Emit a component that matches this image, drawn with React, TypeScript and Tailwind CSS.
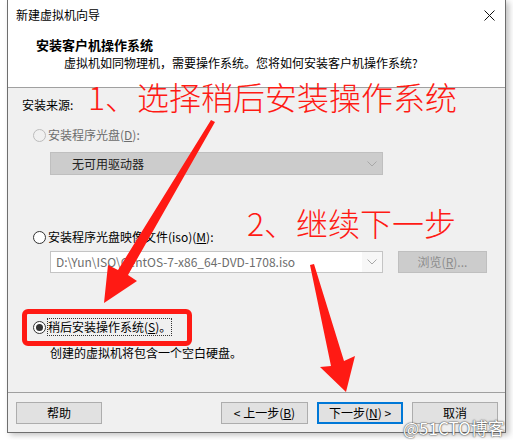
import React from "react";

const Radio = ({ checked = false, disabled = false }: { checked?: boolean; disabled?: boolean }) => (
  <span
    className={`flex h-[13px] w-[13px] items-center justify-center rounded-full border ${
      disabled ? "border-[#bcbcbc] bg-[#f0f0f0]" : "border-[#333333] bg-white"
    }`}
  >
    {checked && <span className="h-[7px] w-[7px] rounded-full bg-[#333333]" />}
  </span>
);

const Chevron = () => (
  <svg width="10" height="6" viewBox="0 0 10 6" className="shrink-0">
    <polyline points="0.5,0.5 5,5 9.5,0.5" fill="none" stroke="#a8a8a8" strokeWidth="1" />
  </svg>
);

const Btn = ({ children, primary = false, className = "" }: { children: React.ReactNode; primary?: boolean; className?: string }) => (
  <div
    className={`flex h-[22px] items-center justify-center bg-[#e1e1e1] text-black ${
      primary ? "border-2 border-[#0078d7]" : "border border-[#adadad]"
    } ${className}`}
  >
    {children}
  </div>
);

export default function App() {
  return (
    <div className="relative h-[440px] w-[513px] overflow-hidden bg-white font-['Noto_Sans_CJK_SC','Microsoft_YaHei',sans-serif] text-[12px] leading-[16px] text-black">
      <div className="ml-[7px] flex h-[433px] w-[499px] flex-col border-x border-b border-[#6e6e6e] bg-[#f0f0f0] shadow-[3px_2px_6px_rgba(0,0,0,0.25)]">
        {/* title bar */}
        <div className="flex h-[30px] items-center justify-between bg-white pl-[8px] pr-[10px]">
          <span>新建虚拟机向导</span>
          <svg width="11" height="11" viewBox="0 0 11 11">
            <path d="M0.5 0.5 L10.5 10.5 M10.5 0.5 L0.5 10.5" stroke="#111" strokeWidth="1" />
          </svg>
        </div>

        {/* header */}
        <div className="h-[58px] border-b border-[#a0a0a0] bg-white pt-[6px]">
          <div className="pl-[28px] text-[13px] font-bold leading-[18px]">安装客户机操作系统</div>
          <div className="pl-[56px] leading-[18px]">虚拟机如同物理机，需要操作系统。您将如何安装客户机操作系统?</div>
        </div>

        {/* body */}
        <div className="flex h-[304px] flex-col pl-[14px]">
          <div className="mt-[9px]">安装来源:</div>

          <div className="mt-[14px] flex items-center gap-[2px] pl-[11px] text-[#6d6d6d]">
            <Radio disabled />
            <span>
              安装程序光盘(<span className="underline">D</span>):
            </span>
          </div>

          <div className="ml-[28px] mt-[9px] flex h-[23px] w-[333px] items-center justify-between border border-[#bfbfbf] bg-[#cccccc] pl-[21px] pr-[5px] text-[#222]">
            <span>无可用驱动器</span>
            <Chevron />
          </div>

          <div className="mt-[54px] flex items-center gap-[2px] pl-[11px]">
            <Radio />
            <span>
              安装程序光盘映像文件(iso)(<span className="underline">M</span>):
            </span>
          </div>

          <div className="mt-[6px] flex items-center">
            <div className="ml-[28px] flex h-[22px] w-[333px] items-stretch border border-[#c4c4c4] bg-white text-[#6d6d6d]">
              <div className="flex flex-1 items-center pl-[5px]">D:\Yun\ISO\CentOS-7-x86_64-DVD-1708.iso</div>
              <div className="flex w-[20px] items-center justify-center bg-[#f7f7f7]">
                <Chevron />
              </div>
            </div>
            <div className="ml-[15px] flex h-[22px] w-[89px] items-center justify-center border border-[#bfbfbf] bg-[#cccccc] text-[#8c8c8c]">
              浏览(<span className="underline">R</span>)...
            </div>
          </div>

          <div className="mt-[46px] flex items-center gap-[2px] pl-[11px]">
            <Radio checked />
            <span className="outline outline-1 outline-dotted outline-[#333]">
              稍后安装操作系统(<span className="underline">S</span>)。
            </span>
          </div>

          <div className="mt-[10px] pl-[28px]">创建的虚拟机将包含一个空白硬盘。</div>
        </div>

        {/* footer */}
        <div className="flex flex-1 items-start border-t border-[#a0a0a0] pl-[8px] pt-[9px]">
          <Btn className="w-[86px]">帮助</Btn>
          <Btn className="ml-[119px] w-[87px]">
            &lt; 上一步(<span className="underline">B</span>)
          </Btn>
          <Btn primary className="ml-[9px] w-[86px]">
            下一步(<span className="underline">N</span>) &gt;
          </Btn>
          <Btn className="ml-[9px] w-[86px]">取消</Btn>
        </div>
      </div>

      {/* annotations */}
      <div className="absolute left-[22px] top-[309px] h-[37px] w-[170px] rounded-[6px] border-[5px] border-[#ff1a14]" />

      <svg className="absolute left-0 top-0" width="513" height="440" viewBox="0 0 513 440">
        <polygon points="211,120 215,122 128,275 137,281 104,303 108,265 118,270" fill="#ff1a14" />
        <polygon points="310,265 314,264 344,361 355,356 346,392 320,367 331,366" fill="#ff1a14" />
      </svg>

      <div className="absolute left-[88px] top-[76px] text-[32px] font-light leading-[40px] text-[#ff1a14]">1、选择稍后安装操作系统</div>
      <div className="absolute left-[247px] top-[202px] text-[32px] font-light leading-[40px] text-[#ff1a14]">2、继续下一步</div>

      <div className="absolute left-[403px] top-[417px] text-[17px] leading-[22px] text-white [text-shadow:0_0_2px_#444,0_0_1px_#444]">
        @51CTO博客
      </div>
    </div>
  );
}
